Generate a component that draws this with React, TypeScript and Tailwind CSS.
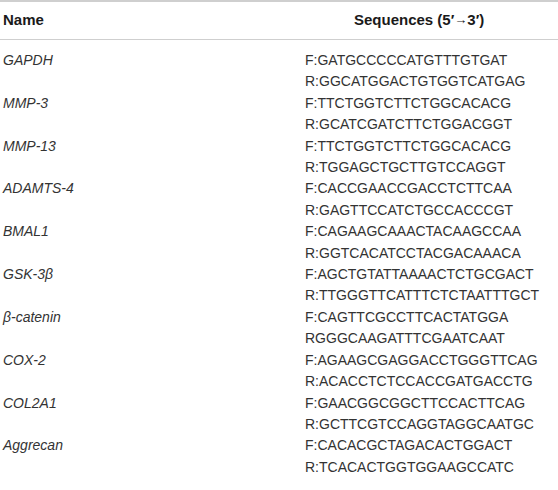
import React from "react";

const rows: [React.ReactNode, string, string][] = [
  ["GAPDH", "F:GATGCCCCCATGTTTGTGAT", "R:GGCATGGACTGTGGTCATGAG"],
  ["MMP-3", "F:TTCTGGTCTTCTGGCACACG", "R:GCATCGATCTTCTGGACGGT"],
  ["MMP-13", "F:TTCTGGTCTTCTGGCACACG", "R:TGGAGCTGCTTGTCCAGGT"],
  ["ADAMTS-4", "F:CACCGAACCGACCTCTTCAA", "R:GAGTTCCATCTGCCACCCGT"],
  ["BMAL1", "F:CAGAAGCAAACTACAAGCCAA", "R:GGTCACATCCTACGACAAACA"],
  ["GSK-3β", "F:AGCTGTATTAAAACTCTGCGACT", "R:TTGGGTTCATTTCTCTAATTTGCT"],
  ["β-catenin", "F:CAGTTCGCCTTCACTATGGA", "RGGGCAAGATTTCGAATCAAT"],
  ["COX-2", "F:AGAAGCGAGGACCTGGGTTCAG", "R:ACACCTCTCCACCGATGACCTG"],
  ["COL2A1", "F:GAACGGCGGCTTCCACTTCAG", "R:GCTTCGTCCAGGTAGGCAATGC"],
  ["Aggrecan", "F:CACACGCTAGACACTGGACT", "R:TCACACTGGTGGAAGCCATC"],
];

export default function App() {
  return (
    <div
      className="w-[558px] h-[490px] bg-white text-[#333]"
      style={{ fontFamily: '"Liberation Sans", Arial, sans-serif' }}
    >
      <div className="border-t-2 border-b border-[#cfcfcf] flex h-[40px] items-center text-[15px] font-bold text-[#1a1a1a]">
        <div className="w-[307px] pl-[3px]">Name</div>
        <div className="pl-[47px]">
          Sequences (5′<span className="relative -top-[1px] text-[13px] font-normal">→</span>3′)
        </div>
      </div>
      <div className="pt-[10px] pb-[13px] border-b-2 border-[#cfcfcf] text-[14px] leading-[21.4px]">
        {rows.map(([name, f, r], i) => (
          <div key={i} className="flex">
            <div className="w-[305px] pl-[3px] italic">{name}</div>
            <div className="flex flex-col">
              <div>{f}</div>
              <div>{r}</div>
            </div>
          </div>
        ))}
      </div>
    </div>
  );
}
